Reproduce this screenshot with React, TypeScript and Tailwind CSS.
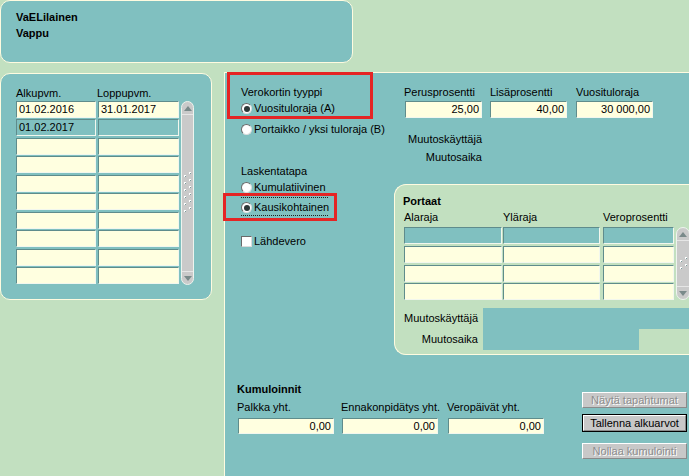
import React from "react";

const CREAM = "border-[#fffbe0]";

function Field({
  cls,
  teal,
  text,
  right,
}: {
  cls: string;
  teal?: boolean;
  text?: string;
  right?: boolean;
}) {
  return (
    <div
      className={`${cls} ${teal ? "bg-[#80c0c0]" : "bg-[#ffffe0]"} shrink-0 border border-t-[#5f8c8c] border-l-[#5f8c8c] border-b-[#f2f7ee] border-r-[#f2f7ee] flex items-center overflow-hidden whitespace-nowrap ${right ? "justify-end pr-[2px]" : "pl-[2px]"}`}
    >
      {text}
    </div>
  );
}

function Radio({ checked }: { checked?: boolean }) {
  return (
    <span className="w-[11px] h-[11px] rounded-full bg-white border border-t-[#6a6a6a] border-l-[#6a6a6a] border-r-[#dcdcdc] border-b-[#dcdcdc] flex items-center justify-center shrink-0">
      {checked && <span className="w-[6px] h-[6px] rounded-full bg-[#2c3838]" />}
    </span>
  );
}

function Arrow({ up }: { up?: boolean }) {
  return (
    <svg width="8" height="5" viewBox="0 0 8 5">
      <polygon points={up ? "0,5 8,5 4,0" : "0,0 8,0 4,5"} fill="#7a8a8a" />
    </svg>
  );
}

function Grip({ rows }: { rows: number }) {
  const dots: React.ReactNode[] = [];
  for (let i = 0; i < rows; i++) {
    const y = i * 7;
    dots.push(<rect key={`a${i}`} x={1} y={y + 3} width={2} height={2} fill="#ffffff" />);
    dots.push(<rect key={`b${i}`} x={6} y={y} width={2} height={2} fill="#ffffff" />);
    dots.push(<rect key={`c${i}`} x={2} y={y + 4} width={1} height={1} fill="#7a9a9a" />);
    dots.push(<rect key={`d${i}`} x={7} y={y + 1} width={1} height={1} fill="#7a9a9a" />);
  }
  return (
    <svg width="9" height={rows * 7} viewBox={`0 0 9 ${rows * 7}`}>
      {dots}
    </svg>
  );
}

function VScroll({ cls, rows }: { cls: string; rows: number }) {
  return (
    <div
      className={`${cls} shrink-0 rounded-[7px] bg-[#cacaca] border border-[#eef4ee] flex flex-col items-center justify-between`}
    >
      <div className="w-full h-[13px] flex items-center justify-center border-b border-[#e6e6e6]">
        <Arrow up />
      </div>
      <Grip rows={rows} />
      <div className="w-full h-[13px] flex items-center justify-center border-t border-[#e6e6e6]">
        <Arrow />
      </div>
    </div>
  );
}

function Button({ label, disabled, def }: { label: string; disabled?: boolean; def?: boolean }) {
  return (
    <div
      className={`w-[105px] ${def ? "h-[18px] border border-black" : "h-[16px]"} shrink-0`}
    >
      <div
        className={`w-full h-full bg-[#c8c8c8] border border-t-white border-l-white border-b-[#8a8a8a] border-r-[#8a8a8a] flex items-center justify-center whitespace-nowrap ${disabled ? "text-[#8c8c8c] [text-shadow:1px_1px_0_#ffffff]" : "text-black"}`}
      >
        {label}
      </div>
    </div>
  );
}

const leftRows: [string, string, boolean][] = [
  ["01.02.2016", "31.01.2017", false],
  ["01.02.2017", "", true],
  ["", "", false],
  ["", "", false],
  ["", "", false],
  ["", "", false],
  ["", "", false],
  ["", "", false],
  ["", "", false],
  ["", "", false],
];
const leftGaps = ["mt-0", "mt-[1px]", "mt-[2px]", "mt-[1px]", "mt-[2px]", "mt-[1px]", "mt-[2px]", "mt-[1px]", "mt-[2px]", "mt-[1px]"];
const portGaps = ["mt-0", "mt-[2px]", "mt-[2px]", "mt-[1px]"];

export default function App() {
  return (
    <div className="relative w-[689px] h-[476px] overflow-hidden bg-[#c2e0c0] font-['Liberation_Sans',Arial,sans-serif] text-[11px] leading-[13px] text-black">
      {/* header */}
      <div className={`w-[353px] h-[63px] rounded-[10px] border ${CREAM} bg-[#80c0c0] pl-[15px] pt-[10px] font-bold`}>
        <div>VaELilainen</div>
        <div className="mt-[3px]">Vappu</div>
      </div>

      <div className="flex items-start mt-[9px]">
        {/* left panel */}
        <div className={`w-[212px] h-[227px] mt-[1px] shrink-0 rounded-[10px] border ${CREAM} bg-[#80c0c0] pl-[15px] pt-[13px]`}>
          <div className="flex">
            <div className="w-[81px]">Alkupvm.</div>
            <div>Loppupvm.</div>
          </div>
          <div className="flex mt-[1px]">
            <div className="flex flex-col">
              {leftRows.map((r, i) => (
                <div key={i} className={`flex gap-[2px] ${leftGaps[i]}`}>
                  <Field cls="w-[80px] h-[17px]" teal={r[2]} text={r[0]} />
                  <Field cls="w-[81px] h-[17px]" teal={r[2]} text={r[1]} />
                </div>
              ))}
            </div>
            <div className="ml-[2px]">
              <VScroll cls="w-[13px] h-[184px]" rows={6} />
            </div>
          </div>
        </div>

        {/* main panel */}
        <div className={`ml-[12px] flex-1 h-[410px] border-t border-l ${CREAM} bg-[#80c0c0] flex flex-col`}>
          <div className="flex">
            {/* left column */}
            <div className="w-[169px] shrink-0 pl-[16px]">
              <div className="mt-[13px]">Verokortin tyyppi</div>
              <div className="mt-[3px] h-[13px] flex items-center gap-[2px]">
                <Radio checked />
                <span>Vuosituloraja (A)</span>
              </div>
              <div className="mt-[8px] h-[13px] flex items-center gap-[2px] whitespace-nowrap">
                <Radio />
                <span>Portaikko / yksi tuloraja (B)</span>
              </div>
              <div className="mt-[29px]">Laskentatapa</div>
              <div className="mt-[3px] h-[13px] flex items-center gap-[2px]">
                <Radio />
                <span>Kumulatiivinen</span>
              </div>
              <div className="mt-[3px] w-[87px] border-t border-b border-dotted border-[#202020] pt-[3px] pb-[1px]">
                <div className="h-[13px] flex items-center gap-[2px]">
                  <Radio checked />
                  <span>Kausikohtainen</span>
                </div>
              </div>
              <div className="mt-[19px] h-[13px] flex items-center gap-[2px]">
                <span className="w-[11px] h-[11px] bg-white border border-t-[#6a6a6a] border-l-[#6a6a6a] border-r-[#dcdcdc] border-b-[#dcdcdc] shrink-0" />
                <span>Lähdevero</span>
              </div>
            </div>

            {/* right column */}
            <div className="flex-1 flex flex-col">
              <div className="pl-[10px]">
                <div className="mt-[13px] flex">
                  <div className="w-[86px] shrink-0">
                    <div>Perusprosentti</div>
                    <div className="mt-[2px] ml-[1px]">
                      <Field cls="w-[77px] h-[17px]" text="25,00" right />
                    </div>
                  </div>
                  <div className="w-[86px] shrink-0">
                    <div>Lisäprosentti</div>
                    <div className="mt-[2px]">
                      <Field cls="w-[77px] h-[17px]" text="40,00" right />
                    </div>
                  </div>
                  <div className="w-[86px] shrink-0">
                    <div>Vuosituloraja</div>
                    <div className="mt-[2px]">
                      <Field cls="w-[77px] h-[17px]" text="30 000,00" right />
                    </div>
                  </div>
                </div>
                <div className="mt-[15px] w-[78px] text-right">Muutoskäyttäjä</div>
                <div className="mt-[5px] w-[78px] text-right">Muutosaika</div>
              </div>

              {/* Portaat */}
              <div className={`mt-[20px] h-[171px] rounded-l-[12px] border-t border-l border-b ${CREAM} bg-[#c2e0c0] overflow-hidden pl-[9px] pt-[10px]`}>
                <div className="font-bold -ml-[1px]">Portaat</div>
                <div className="mt-[3px] flex">
                  <div className="w-[99px] shrink-0">Alaraja</div>
                  <div className="w-[100px] shrink-0">Yläraja</div>
                  <div className="shrink-0 whitespace-nowrap">Veroprosentti</div>
                </div>
                <div className="mt-[3px] flex">
                  <div className="flex flex-col">
                    {[0, 1, 2, 3].map((i) => (
                      <div key={i} className={`flex ${portGaps[i]}`}>
                        <Field cls="w-[98px] h-[17px]" teal={i === 0} />
                        <div className="ml-[1px]">
                          <Field cls="w-[97px] h-[17px]" teal={i === 0} />
                        </div>
                        <div className="ml-[3px]">
                          <Field cls="w-[71px] h-[17px]" teal={i === 0} />
                        </div>
                      </div>
                    ))}
                  </div>
                  <div className="ml-[2px]">
                    <VScroll cls="w-[14px] h-[73px]" rows={2} />
                  </div>
                </div>
                <div className="mt-[8px] h-[21px] flex items-center">
                  <div className="w-[74px] text-right shrink-0">Muutoskäyttäjä</div>
                  <div className="ml-[5px] flex-1 h-[21px] bg-[#80c0c0]" />
                </div>
                <div className="h-[21px] flex items-center">
                  <div className="w-[74px] text-right shrink-0">Muutosaika</div>
                  <div className="ml-[5px] w-[156px] h-[21px] bg-[#80c0c0]" />
                </div>
              </div>
            </div>
          </div>

          {/* Kumuloinnit + buttons */}
          <div className="flex justify-between">
            <div className="pl-[12px]">
              <div className="mt-[28px] font-bold">Kumuloinnit</div>
              <div className="mt-[5px] flex">
                <div className="w-[104px] shrink-0">
                  <div>Palkka yht.</div>
                  <div className="mt-[4px] ml-[1px]">
                    <Field cls="w-[96px] h-[16px]" text="0,00" right />
                  </div>
                </div>
                <div className="w-[106px] shrink-0">
                  <div className="whitespace-nowrap">Ennakonpidätys yht.</div>
                  <div className="mt-[4px] ml-[1px]">
                    <Field cls="w-[96px] h-[16px]" text="0,00" right />
                  </div>
                </div>
                <div className="w-[106px] shrink-0">
                  <div>Veropäivät yht.</div>
                  <div className="mt-[4px] ml-[1px]">
                    <Field cls="w-[96px] h-[16px]" text="0,00" right />
                  </div>
                </div>
              </div>
            </div>
            <div className="mr-[3px] mt-[37px] flex flex-col">
              <Button label="Näytä tapahtumat" disabled />
              <div className="mt-[6px]">
                <Button label="Tallenna alkuarvot" def />
              </div>
              <div className="mt-[11px]">
                <Button label="Nollaa kumulointi" disabled />
              </div>
            </div>
          </div>
        </div>
      </div>

      {/* red annotation boxes */}
      <div className="absolute left-[227px] top-[72px] w-[146px] h-[47px] border-[3px] border-[#e52424]" />
      <div className="absolute left-[223px] top-[193px] w-[114px] h-[28px] border-[3px] border-[#e52424]" />
    </div>
  );
}
